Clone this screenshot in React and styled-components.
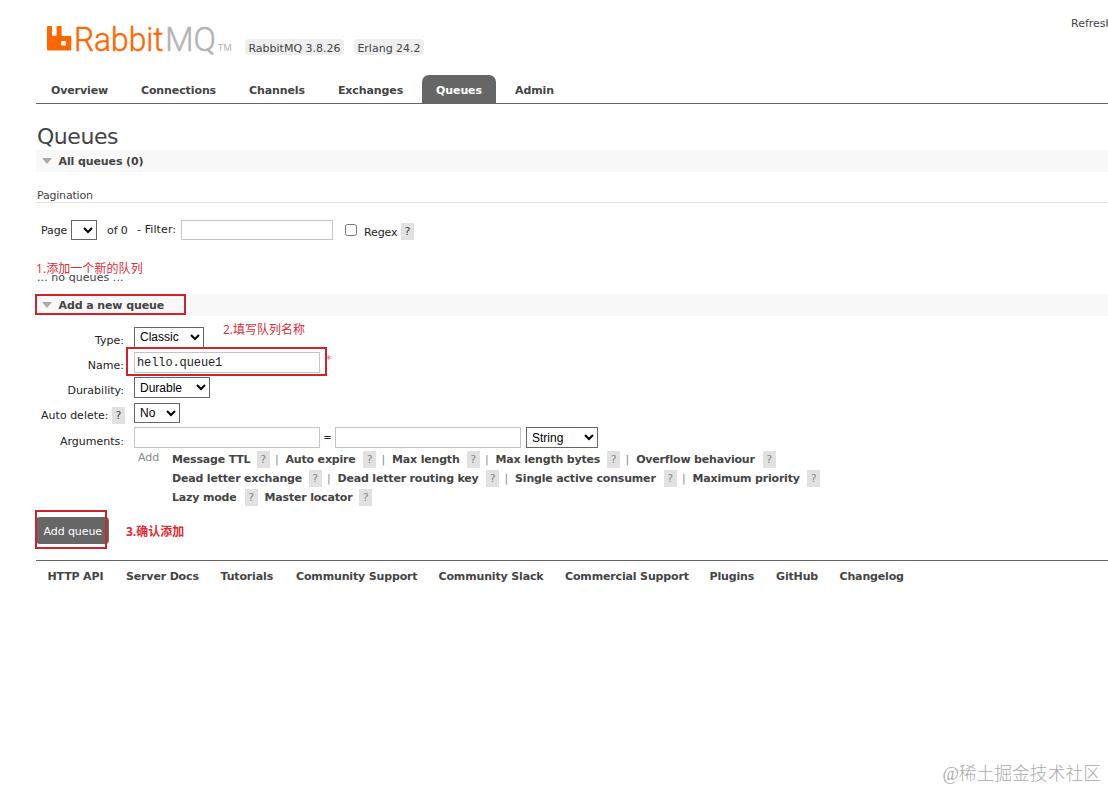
import React from "react";
import styled, { createGlobalStyle } from "styled-components";

const tabs = [
  { name: "Overview", width: 57 },
  { name: "Connections", width: 75 },
  { name: "Channels", width: 56 },
  { name: "Exchanges", width: 65 },
  { name: "Queues", width: 46, active: true },
  { name: "Admin", width: 39 },
];

const argumentRows = [
  [
    { name: "Message TTL", width: 78 },
    { name: "Auto expire", width: 71 },
    { name: "Max length", width: 68 },
    { name: "Max length bytes", width: 105 },
    { name: "Overflow behaviour", width: 120, last: true },
  ],
  [
    { name: "Dead letter exchange", width: 130 },
    { name: "Dead letter routing key", width: 142 },
    { name: "Single active consumer", width: 142 },
    { name: "Maximum priority", width: 108, last: true },
  ],
  [
    { name: "Lazy mode", width: 66, last: true },
    { name: "Master locator", width: 88, last: true },
  ],
];

const links = [
  { name: "HTTP API", width: 57 },
  { name: "Server Docs", width: 73 },
  { name: "Tutorials", width: 54 },
  { name: "Community Support", width: 121 },
  { name: "Community Slack", width: 105 },
  { name: "Commercial Support", width: 123 },
  { name: "Plugins", width: 45 },
  { name: "GitHub", width: 42 },
  { name: "Changelog", width: 64 },
];

function Logo() {
  return (
    <LogoImage width="190" height="40" viewBox="0 0 190 40">
      <path
        fill="#ff6600"
        d="M2 5h3q1 0 1 1v8q0 1 1 1h2.600q1 0 1-1V6q0-1 1-1h3q1 0 1 1v8q0 1 1 1h7.700q1 0 1 1v12.500q0 1-1 1H2q-1 0-1-1V6q0-1 1-1zM15.800 20q-.8 0-.8.8v3q0 .8.8.8h3.200q.8 0 .8-.8v-3q0-.8-.8-.8z"
      />
      <LogoText x="28" y="30" textLength="89.5" lengthAdjust="spacingAndGlyphs" $color="#f60">
        Rabbit
      </LogoText>
      <LogoText x="119" y="30" textLength="51" lengthAdjust="spacingAndGlyphs" $color="#b3b3b3">
        MQ
      </LogoText>
      <TradeMark x="172" y="30" textLength="14" lengthAdjust="spacingAndGlyphs">
        TM
      </TradeMark>
    </LogoImage>
  );
}

function Section({ title, marked }) {
  return (
    <SectionBar>
      <Triangle />
      <SectionText>{title}</SectionText>
      {marked && <Marker $left={-1} $top={0} $width={151} $height={21} />}
    </SectionBar>
  );
}

function App() {
  return (
    <Page>
      <GlobalStyle />
      <Header>
        <Logo />
        <Version $width={99}>RabbitMQ 3.8.26</Version>
        <Version $width={70}>Erlang 24.2</Version>
        <Refresh>Refreshed</Refresh>
      </Header>
      <Tabs>
        {tabs.map((tab) => (
          <Tab key={tab.name} $active={tab.active} $width={tab.width}>
            {tab.name}
          </Tab>
        ))}
      </Tabs>

      <Title>Queues</Title>
      <Section title="All queues (0)" />
      <Pagination>Pagination</Pagination>
      <Filter>
        <FilterText $width={30}>Page</FilterText>
        <Select $width={26} $height={20} />
        <FilterText $left={10} $width={30}>of 0</FilterText>
        <FilterText $width={44} $up>- Filter:</FilterText>
        <Input $width={152} $height={20} />
        <Checkbox type="checkbox" />
        <FilterText $left={7} $width={37} $down>Regex</FilterText>
        <Help $down>?</Help>
      </Filter>
      <Empty>
        ... no queues ...
        <Note $left={0} $top={3}>1.添加一个新的队列</Note>
      </Empty>

      <Section title="Add a new queue" marked />
      <Form>
        <Row>
          <Label>Type:</Label>
          <Select $width={70} $raised>
            <option>Classic</option>
          </Select>
          <Note $left={186} $top={-6}>2.填写队列名称</Note>
        </Row>
        <Row>
          <Label>Name:</Label>
          <Input $width={186} defaultValue="hello.queue1" />
          <Required>*</Required>
          <Marker $left={89} $top={-5} $width={201} $height={29} />
        </Row>
        <Row>
          <Label>Durability:</Label>
          <Select $width={76}>
            <option>Durable</option>
          </Select>
        </Row>
        <Row>
          <Label $shift={1}>
            Auto delete: <Help>?</Help>
          </Label>
          <Select $width={46} $height={20} $drop>
            <option>No</option>
          </Select>
        </Row>
        <Row>
          <Label $low>Arguments:</Label>
          <Input $width={186} />
          <Equals>=</Equals>
          <Input $width={186} />
          <Select $width={72} $left={5}>
            <option>String</option>
          </Select>
        </Row>
      </Form>

      <Arguments>
        <AddText>Add</AddText>
        <div>
          {argumentRows.map((row, i) => (
            <ArgumentRow key={i}>
              {row.map((arg) => (
                <Argument key={arg.name}>
                  <Fixed $width={arg.width}>{arg.name}</Fixed>
                  <Help $muted>?</Help>
                  {!arg.last && <Divider>|</Divider>}
                </Argument>
              ))}
            </ArgumentRow>
          ))}
        </div>
      </Arguments>

      <Submit>
        <Button>Add queue</Button>
        <Marker $left={-1} $top={-7} $width={72} $height={39} />
        <Note $left={90} $top={6} $bold>3.确认添加</Note>
      </Submit>
      <Footer>
        {links.map((link) => (
          <Fixed key={link.name} $width={link.width}>{link.name}</Fixed>
        ))}
      </Footer>
      <Watermark>@稀土掘金技术社区</Watermark>
    </Page>
  );
}

const GlobalStyle = createGlobalStyle`
  * {
    box-sizing: border-box;
  }
  body {
    margin: 0;
    overflow: hidden;
    background: #fff;
  }
`;

const Page = styled.div`
  position: relative;
  width: 1108px;
  height: 790px;
  padding-left: 36px;
  overflow: hidden;
  color: #444;
  font: 11px/16px "DejaVu Sans", "Noto Sans CJK SC", sans-serif;
  white-space: nowrap;
`;

const Header = styled.div`
  display: flex;
  height: 75px;
  padding: 21px 0 0 10px;
`;

const LogoImage = styled.svg`
  flex: none;
  overflow: visible;
`;

const LogoText = styled.text`
  fill: ${(p) => p.$color};
  stroke: ${(p) => p.$color};
  stroke-width: 0.5px;
  font-family: Roboto, sans-serif;
  font-weight: 300;
  font-size: 34px;
`;

const TradeMark = styled.text`
  fill: #b3b3b3;
  font-family: "Open Sans", sans-serif;
  font-size: 9px;
`;

const Version = styled.span`
  width: ${(p) => p.$width}px;
  height: 16px;
  margin: 18px 0 0 9px;
  border-radius: 4px;
  background: #eee;
  line-height: 19px;
  text-align: center;
  & + & {
    margin-left: 10px;
  }
`;

const Refresh = styled.span`
  width: 37px;
  margin: -6px 0 0 auto;
  overflow: hidden;
  line-height: 18px;
`;

const Tabs = styled.nav`
  display: flex;
  gap: 5px;
  height: 29px;
  padding-left: 1px;
  border-bottom: 1px solid #666;
`;

const Tab = styled.a`
  width: ${(p) => p.$width + 28}px;
  height: 28px;
  border-radius: 7px 7px 0 0;
  background: ${(p) => (p.$active ? "#666" : "transparent")};
  color: ${(p) => (p.$active ? "#fff" : "#444")};
  font-weight: bold;
  letter-spacing: -0.1px;
  line-height: 31px;
  text-align: center;
`;

const Title = styled.h1`
  height: 46px;
  margin: 0;
  padding: 18px 0 0 1px;
  font-size: 22px;
  font-weight: normal;
  letter-spacing: -0.45px;
  line-height: 29px;
`;

const SectionBar = styled.h2`
  position: relative;
  display: flex;
  align-items: center;
  height: 22px;
  margin: 0;
  padding-left: 6px;
  background: #f8f8f8;
  font-size: 11px;
  font-weight: bold;
`;

const SectionText = styled.span`
  padding-top: 1px;
  letter-spacing: -0.1px;
  line-height: 17px;
`;

const Triangle = styled.i`
  margin-right: 6.5px;
  border: solid transparent;
  border-width: 6px 5.5px 0;
  border-top-color: #aaa;
`;

const Marker = styled.div`
  position: absolute;
  left: ${(p) => p.$left}px;
  top: ${(p) => p.$top}px;
  width: ${(p) => p.$width}px;
  height: ${(p) => p.$height}px;
  border: 2px solid #ca252b;
`;

const Note = styled.span`
  position: absolute;
  left: ${(p) => p.$left}px;
  top: ${(p) => p.$top}px;
  color: #dc2b34;
  font: ${(p) => (p.$bold ? "bold" : "normal")} 12px/18px "Open Sans", "Noto Sans CJK SC", sans-serif;
`;

const Pagination = styled.div`
  height: 31px;
  padding: 16px 0 0 1px;
  border-bottom: 1px solid #e4e4e4;
  letter-spacing: -0.2px;
  line-height: 15px;
`;

const Filter = styled.div`
  display: flex;
  align-items: center;
  height: 54px;
  padding-left: 5px;
  color: #222;
`;

const FilterText = styled.span`
  width: ${(p) => p.$width}px;
  margin-left: ${(p) => p.$left || 0}px;
  padding-top: ${(p) => (p.$down ? 5 : p.$up ? 0 : 2)}px;
  letter-spacing: ${(p) => (p.$up ? 0.1 : -0.1)}px;
`;

const Select = styled.select`
  width: ${(p) => p.$width}px;
  height: ${(p) => p.$height || 21}px;
  margin: ${(p) => (p.$drop ? 1 : 0)}px 0 0 ${(p) => p.$left || 0}px;
  padding: 0 0 ${(p) => (p.$raised ? 1 : 0)}px 1px;
  border: 1px solid #666;
  border-radius: 0;
  background: #fff;
  color: #000;
  font: 12px "Liberation Sans", sans-serif;
`;

const Input = styled.input`
  width: ${(p) => p.$width}px;
  height: ${(p) => p.$height || 21}px;
  padding: 0 2px;
  border: 1px solid #c4c4c4;
  border-radius: 0;
  background: #fff;
  color: #222;
  font: 12px "Liberation Mono", monospace;
  letter-spacing: -0.1px;
`;

const Checkbox = styled.input`
  width: 12px;
  height: 12px;
  margin: 0 0 0 12px;
`;

const Help = styled.span`
  display: inline-block;
  width: 13px;
  height: 17px;
  margin-top: ${(p) => (p.$down ? 3 : 0)}px;
  background: #e1e1e1;
  color: ${(p) => (p.$muted ? "#888" : "#444")};
  font-weight: normal;
  line-height: 18px;
  text-align: center;
`;

const Empty = styled.div`
  position: relative;
  height: 37px;
  padding: 13px 0 0 1px;
  letter-spacing: 0.07px;
`;

const Form = styled.div`
  padding: 11px 0 0 1px;
  color: #222;
`;

const Row = styled.div`
  position: relative;
  display: flex;
  height: 25px;
`;

const Label = styled.label`
  width: 88px;
  height: 17px;
  margin: ${(p) => (p.$low ? 6 : 5)}px ${(p) => 10 - (p.$shift || 0)}px 0
    ${(p) => (p.$shift || 0) - 1}px;
  line-height: 17px;
  text-align: right;
`;

const Required = styled.span`
  margin-left: 6px;
  color: #f06a78;
`;

const Equals = styled.span`
  width: 15px;
  font-size: 10px;
  line-height: 21px;
  text-align: center;
`;

const Arguments = styled.div`
  display: flex;
  height: 65px;
  padding-left: 102px;
`;

const AddText = styled.span`
  width: 34px;
  margin-top: -2px;
  color: #888;
`;

const ArgumentRow = styled.div`
  display: flex;
  height: 19px;
`;

const Argument = styled.span`
  display: flex;
  margin-right: 7px;
  font-weight: bold;
  letter-spacing: -0.18px;
  ${Help} {
    margin: -1px 0 0 6.5px;
  }
`;

const Fixed = styled.span`
  width: ${(p) => p.$width}px;
`;

const Divider = styled.span`
  margin-left: 5.5px;
  color: #888;
  font-weight: normal;
`;

const Submit = styled.div`
  position: relative;
  height: 43px;
`;

const Button = styled.button`
  width: 72.5px;
  height: 27px;
  padding: 1px 0 0 1px;
  border: 0;
  border-radius: 4px;
  background: #666;
  color: #fff;
  font: 11px "DejaVu Sans", sans-serif;
  letter-spacing: -0.1px;
`;

const Footer = styled.footer`
  display: flex;
  gap: 21.5px;
  padding: 8px 0 0 11.5px;
  border-top: 1px solid #666;
  font-weight: bold;
  letter-spacing: -0.15px;
`;

const Watermark = styled.div`
  position: absolute;
  right: 7px;
  bottom: 4px;
  color: #aaa;
  font: 300 17.8px/24px "Liberation Serif", "Noto Sans CJK SC", sans-serif;
`;

export default App;
